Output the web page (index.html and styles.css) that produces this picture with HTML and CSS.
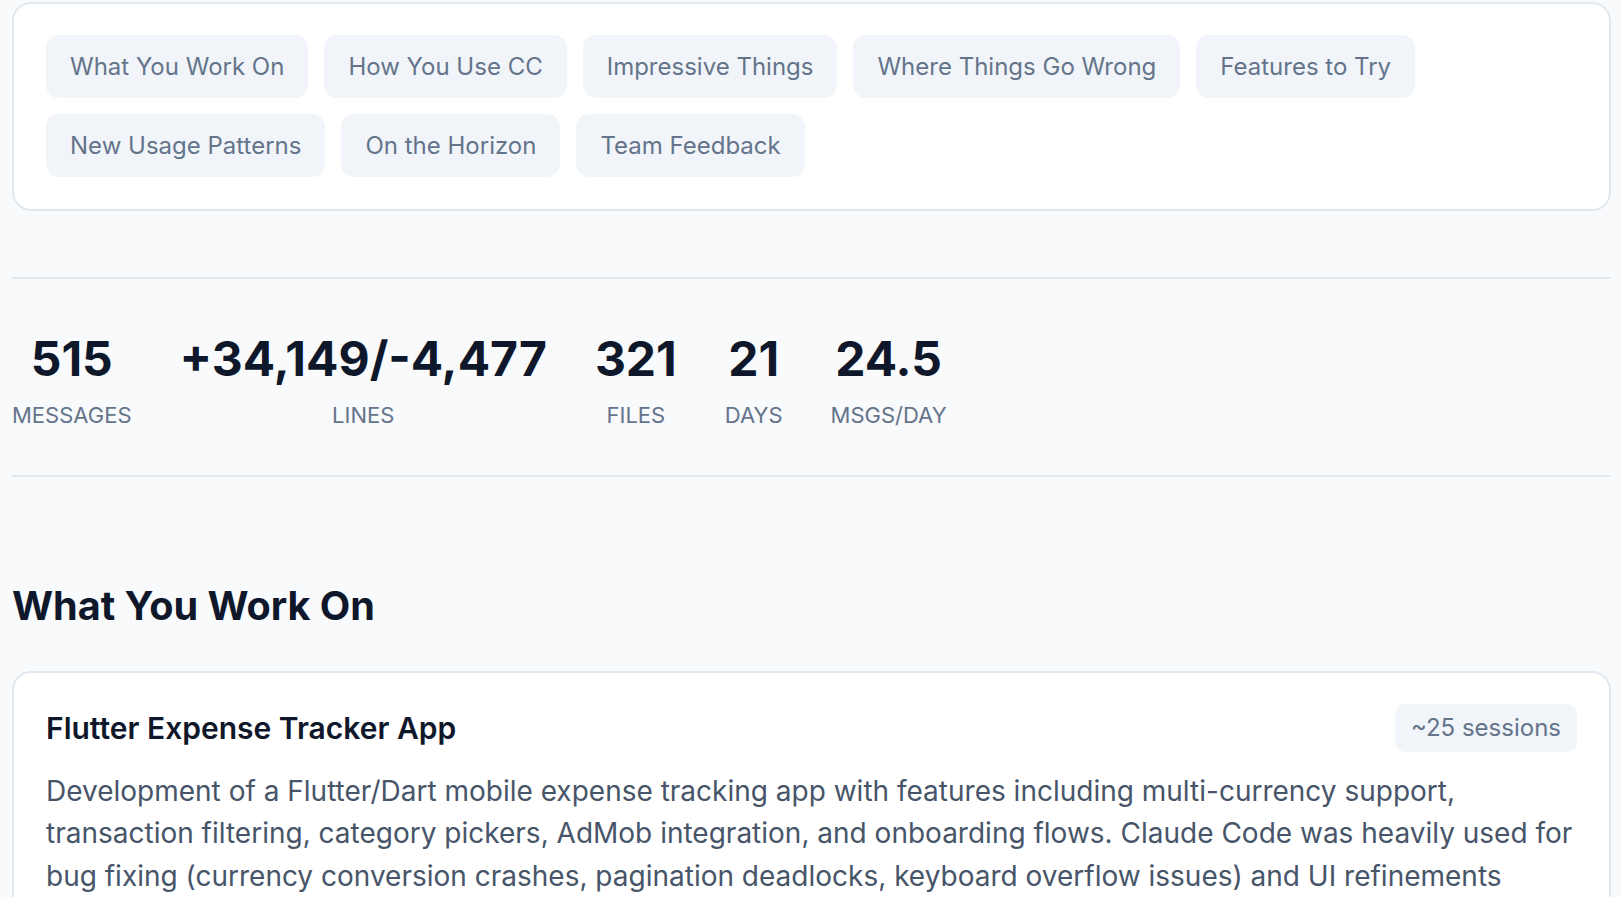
FILE: index.html
```html
<!doctype html>
<html lang="en">
<head>
    <meta charset="utf-8">
    <meta name="viewport" content="width=device-width, initial-scale=1">
    <title>Claude Code Insights</title>
    <link rel="stylesheet" href="styles.css">
</head>
<body>
  <div class="page">

    <!-- section nav -->
    <div class="nav-card">
      <a class="nav-pill" href="#work">What You Work On</a>
      <a class="nav-pill" href="#usage">How You Use CC</a>
      <a class="nav-pill" href="#wins">Impressive Things</a>
      <a class="nav-pill" href="#friction">Where Things Go Wrong</a>
      <a class="nav-pill" href="#features">Features to Try</a>
      <a class="nav-pill" href="#patterns">New Usage Patterns</a>
      <a class="nav-pill" href="#horizon">On the Horizon</a>
      <a class="nav-pill" href="#feedback">Team Feedback</a>
    </div>

    <!-- stats row -->
    <div class="stats">
      <div class="stat">
        <div class="stat-value">515</div>
        <div class="stat-label">Messages</div>
      </div>
      <div class="stat">
        <div class="stat-value">+34,149/-4,477</div>
        <div class="stat-label">Lines</div>
      </div>
      <div class="stat">
        <div class="stat-value">321</div>
        <div class="stat-label">Files</div>
      </div>
      <div class="stat">
        <div class="stat-value">21</div>
        <div class="stat-label">Days</div>
      </div>
      <div class="stat">
        <div class="stat-value">24.5</div>
        <div class="stat-label">Msgs/Day</div>
      </div>
    </div>

    <h2 class="section-title" id="work">What You Work On</h2>

    <div class="project-card">
      <div class="project-head">
        <div class="project-name">Flutter Expense Tracker App</div>
        <span class="project-count">~25 sessions</span>
      </div>
      <p class="project-desc">
        Development of a Flutter/Dart mobile expense tracking app with features including multi-currency support,
        transaction filtering, category pickers, AdMob integration, and onboarding flows. Claude Code was heavily used for
        bug fixing (currency conversion crashes, pagination deadlocks, keyboard overflow issues) and UI refinements
        across multiple screens, along with localization and release preparation.
      </p>
    </div>

  </div>
</body>
</html>
```

FILE: styles.css
```css
body {
  margin: 0;
  background-color: #f8fafc;
  font-family: 'Inter', 'Noto Sans', sans-serif;
  color: #0f172a;
}

.page {
  padding: 2px 10px 40px 12px;
}

/* nav */
.nav-card {
  display: flex;
  flex-wrap: wrap;
  gap: 16px;
  background-color: #fff;
  border: 2px solid #e2e8f0;
  border-radius: 19px;
  padding: 31px 32px 32px;
}

.nav-pill {
  display: inline-block;
  background-color: #f1f5f9;
  color: #64748b;
  font-size: 24px;
  line-height: 37px;
  padding: 13px 24px;
  border-radius: 13px;
  text-decoration: none;
}

/* stats */
.stats {
  display: flex;
  gap: 48px;
  margin-top: 66px;
  padding: 51px 0 44px;
  border-top: 2px solid #e2e8f0;
  border-bottom: 2px solid #e2e8f0;
}

.stat {
  text-align: center;
}

.stat-value {
  font-size: 48px;
  line-height: 57px;
  font-weight: 700;
  color: #0f172a;
}

.stat-label {
  margin-top: 13px;
  font-size: 22px;
  line-height: 31px;
  color: #64748b;
  text-transform: uppercase;
}

/* section */
.section-title {
  font-size: 39.6px;
  line-height: 48px;
  font-weight: 700;
  margin: 105px 0 41px;
}

.project-card {
  background-color: #fff;
  border: 2px solid #e2e8f0;
  border-radius: 19px;
  padding: 31px 32px;
}

.project-head {
  display: flex;
  justify-content: space-between;
  align-items: center;
  margin-bottom: 18px;
}

.project-name {
  font-size: 30px;
  font-weight: 600;
  color: #0f172a;
}

.project-count {
  background-color: #f1f5f9;
  color: #64748b;
  font-size: 24px;
  line-height: 34px;
  padding: 7px 16px;
  border-radius: 10px;
}

.project-desc {
  margin: 0;
  font-size: 28px;
  line-height: 42.4px;
  color: #475569;
}
```
